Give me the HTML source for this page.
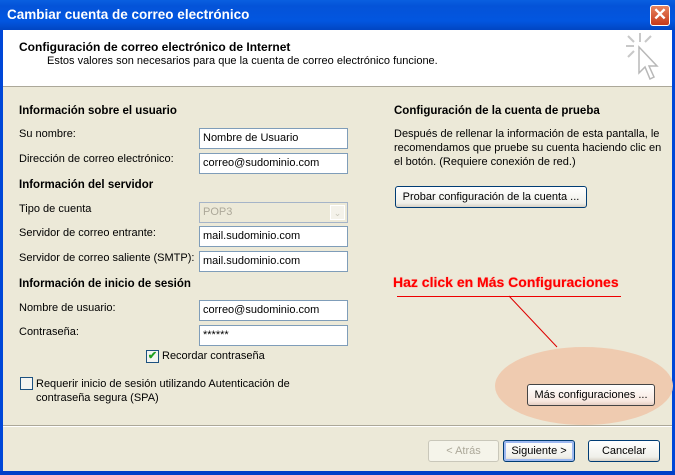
<!DOCTYPE html>
<html><head><meta charset="utf-8"><style>
*{margin:0;padding:0;box-sizing:border-box}
body{width:675px;height:475px;position:relative;overflow:hidden;font-family:"Liberation Sans",sans-serif;font-size:11px;color:#000;background:#ECE9D8}
.a{position:absolute;white-space:nowrap}
.b{font-weight:bold;font-size:11.5px}
.in{position:absolute;left:199px;width:149px;height:21px;background:#fff;border:1px solid #7F9DB9;padding:3px 0 0 3px;font-size:11px}
.btn{position:absolute;height:22px;border:1px solid #003C74;border-radius:3px;background:linear-gradient(#fff,#F0F0EA 80%,#D6D0C5);text-align:center;line-height:20px;font-size:11px}
</style></head><body>
<div class="a" style="left:0;top:0;width:675px;height:30px;background:linear-gradient(#0A5FE0,#0453D8 20%,#0256E0 70%,#0145C2);"></div>
<div class="a" style="left:7px;top:7px;color:#fff;font-size:13.5px;font-weight:bold;">Cambiar cuenta de correo electrónico</div>
<div class="a" style="left:650px;top:5px;width:20px;height:21px;border:1px solid #fff;border-radius:3px;background:linear-gradient(#E8845E,#C6391A);color:#fff;text-align:center;font-size:17px;line-height:18px;font-weight:bold">✕</div>
<div class="a" style="left:0;top:30px;width:3px;height:445px;background:#0047D8"></div>
<div class="a" style="left:672px;top:30px;width:3px;height:445px;background:#0047D8"></div>
<div class="a" style="left:0;top:471px;width:675px;height:4px;background:#0040C8"></div>
<div class="a" style="left:3px;top:30px;width:669px;height:57px;background:#fff;border-bottom:1px solid #ACA899"></div>
<div class="a b" style="left:19px;top:40px;font-size:12px">Configuración de correo electrónico de Internet</div>
<div class="a" style="left:47px;top:55px">Estos valores son necesarios para que la cuenta de correo electrónico funcione.</div>
<svg class="a" style="left:620px;top:30px" width="45" height="55"><g stroke="#C8C8C8" stroke-width="2"><line x1="20" y1="3" x2="20" y2="12"/><line x1="6" y1="16" x2="14" y2="16"/><line x1="8" y1="6" x2="14" y2="12"/><line x1="31" y1="6" x2="25" y2="12"/><line x1="8" y1="27" x2="14" y2="21"/></g><path d="M19 17 L19 43 L25 37 L30 49 L34 47 L29 36 L37 36 Z" fill="#fff" stroke="#B8B8B8" stroke-width="1.5"/></svg>
<div class="a b" style="left:19px;top:105px">Información sobre el usuario</div>
<div class="a" style="left:19px;top:128px">Su nombre:</div>
<div class="in" style="top:128px">Nombre de Usuario</div>
<div class="a" style="left:19px;top:153px">Dirección de correo electrónico:</div>
<div class="in" style="top:153px">correo@sudominio.com</div>
<div class="a b" style="left:19px;top:179px">Información del servidor</div>
<div class="a" style="left:19px;top:203px">Tipo de cuenta</div>
<div class="in" style="top:202px;background:#ECE9D8;border-color:#A5B4C8;color:#ACA899">POP3<div style="position:absolute;right:2px;top:2px;width:15px;height:15px;background:#F4F2EA;border:1px solid #fff;color:#C9C7BA;font-size:9px;text-align:center;line-height:14px">⌄</div></div>
<div class="a" style="left:19px;top:227px">Servidor de correo entrante:</div>
<div class="in" style="top:226px">mail.sudominio.com</div>
<div class="a" style="left:19px;top:252px">Servidor de correo saliente (SMTP):</div>
<div class="in" style="top:251px">mail.sudominio.com</div>
<div class="a b" style="left:19px;top:278px">Información de inicio de sesión</div>
<div class="a" style="left:19px;top:302px">Nombre de usuario:</div>
<div class="in" style="top:300px">correo@sudominio.com</div>
<div class="a" style="left:19px;top:326px">Contraseña:</div>
<div class="in" style="top:325px">******</div>
<div class="a" style="left:146px;top:350px;width:13px;height:13px;border:1px solid #1C5180;background:#F4F4F0;color:#21A121;font-size:11px;line-height:11px;text-align:center;font-weight:bold">✔</div>
<div class="a" style="left:162px;top:350px">Recordar contraseña</div>
<div class="a" style="left:20px;top:377px;width:13px;height:13px;border:1px solid #1C5180;background:#F4F4F0"></div>
<div class="a" style="left:36px;top:377px;line-height:14px">Requerir inicio de sesión utilizando Autenticación de<br>contraseña segura (SPA)</div>
<div class="a b" style="left:394px;top:105px">Configuración de la cuenta de prueba</div>
<div class="a" style="left:394px;top:127px;line-height:14px">Después de rellenar la información de esta pantalla, le<br>recomendamos que pruebe su cuenta haciendo clic en<br>el botón. (Requiere conexión de red.)</div>
<div class="btn" style="left:395px;top:186px;width:192px">Probar configuración de la cuenta ...</div>
<div class="a" style="left:393px;top:274px;color:#F00;font-size:14px;font-weight:bold;text-shadow:0 0 1px #f66">Haz click en Más Configuraciones</div>
<div class="a" style="left:397px;top:296px;width:224px;height:1px;background:#E00"></div>
<svg class="a" style="left:500px;top:295px" width="80" height="60"><line x1="9" y1="1" x2="57" y2="52" stroke="#D00" stroke-width="1"/></svg>
<div class="a" style="left:495px;top:347px;width:178px;height:78px;border-radius:50%;background:#EFCBB0"></div>
<div class="btn" style="left:527px;top:384px;width:128px;background:linear-gradient(#fff,#F8E8E0 80%,#E5CFC3);border-color:#444;">Más configuraciones ...</div>
<div class="a" style="left:3px;top:425px;width:669px;height:1px;background:#ACA899;border-bottom:1px solid #fff;height:2px"></div>
<div class="btn" style="left:428px;top:440px;width:71px;border-color:#C9C7BA;background:#F5F4EA;color:#ACA899">&lt; Atrás</div>
<div class="btn" style="left:503px;top:440px;width:72px;box-shadow:inset 0 0 0 2px #9DB8F0">Siguiente &gt;</div>
<div class="btn" style="left:588px;top:440px;width:72px">Cancelar</div>
</body></html>
